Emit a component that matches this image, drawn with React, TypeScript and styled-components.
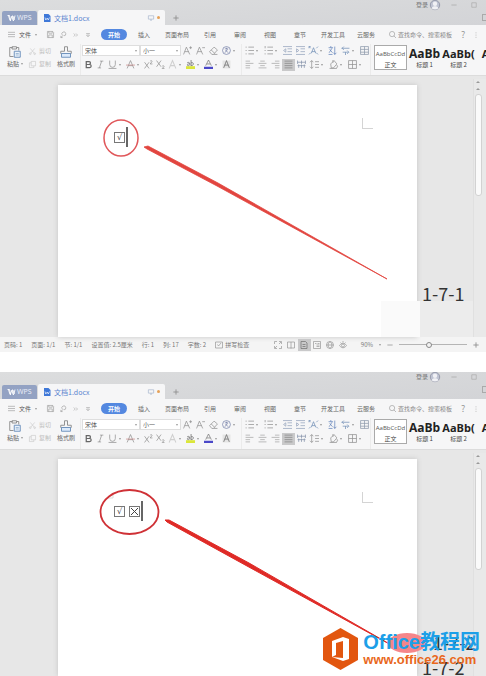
import React from "react";
import styled, { createGlobalStyle, css } from "styled-components";

const Global = createGlobalStyle`
  * { box-sizing: border-box; }
  body {
    margin: 0;
    background: #fff;
    overflow-x: hidden;
    font: 6px/8px "Noto Sans CJK SC", "Noto Sans", sans-serif;
    color: #666;
  }
  #root { overflow: hidden; }
  button, select, input {
    font: inherit;
    color: inherit;
    margin: 0;
    padding: 0;
    border: 0;
    background: none;
  }
  button { display: inline-flex; align-items: center; white-space: nowrap; }
`;

/* ---------- icons ---------- */

const Svg = styled.svg<{ $size: number; $color?: string }>`
  width: ${(p) => p.$size}px;
  height: ${(p) => p.$size}px;
  flex: none;
  display: block;
  overflow: visible;
  fill: none;
  stroke: ${(p) => p.$color || "#909090"};
  stroke-width: 1.3;
`;

const shapes: Record<string, React.ReactNode> = {
  wps: <path d="M1 3h4l2 9 3-8h2l2 8 2-9M3 3l3 10h2M10 4l2 9h2" strokeWidth="1.8" />,
  doc: (
    <>
      <path d="M2 0h9l4 4v12H2z" fill="#3f78d8" stroke="none" />
      <path d="M4 7l1.500 5L8.500 8l2 4L13 7" stroke="#fff" />
    </>
  ),
  monitor: <path d="M1 2h14v9H1zM6 14h4M8 11v3" strokeWidth="1.800" />,
  plus: <path d="M8 1v14M1 8h14" strokeWidth="2.400" />,
  user: (
    <>
      <circle cx="8" cy="8" r="7.500" fill="#bfc3d2" stroke="#8b8fa2" />
      <circle cx="8" cy="6" r="3.500" fill="#f1f1f5" stroke="none" />
      <path d="M2.500 13c2-4 9-4 11 0-3 3-8 3-11 0z" fill="#f1f1f5" stroke="none" />
    </>
  ),
  min: <path d="M1 8h14" strokeWidth="2" />,
  max: <path d="M2 2h12v12H2z" strokeWidth="1.800" />,
  burger: <path d="M0 3h16M0 8h16M0 13h16" />,
  save: <path d="M1 1h12l2 2v12H1zM4 1v4h8V1M4 15V9h8v6" />,
  preview: <path d="M5 9a4.500 4.500 0 1 1 4 2M8 9l-6 6M2 11v4h4" />,
  more: <path d="M2 4l4 4-4 4M8 4l4 4-4 4" />,
  down: <path d="M3 4h10M4 8h8l-4 5z" />,
  search: <path d="M7 1a6 6 0 1 1 0 12A6 6 0 0 1 7 1M11 11l5 5" />,
  dots: <path d="M8 1v2.500M8 7v2.500M8 13v2.500" strokeWidth="2" />,
  paste: (
    <>
      <path d="M5 2H1v12h5M10 2h3v4M4 1h6v3H4z" />
      <path d="M7 7h8v8H7z" fill="#eaf2fb" stroke="#6f93bd" />
      <path d="M9 10h4M9 12h4" stroke="#6f93bd" strokeWidth="0.800" />
    </>
  ),
  cut: <path d="M3 1l9 11M13 1L4 12M3 11a2 2 0 1 1-.1 4 2 2 0 0 1 .1-4M13 11a2 2 0 1 1-.1 4 2 2 0 0 1 .1-4" />,
  copy: <path d="M5 1h10v10H5zM5 4H1v11h10v-4" />,
  brush: (
    <>
      <path d="M6 7V1h4v6h5v3H1V7z" />
      <path d="M2 10h12v5H2z" fill="#dceafb" stroke="#6f93bd" />
    </>
  ),
  bold: <path d="M4 3h5a2.500 2.500 0 0 1 0 5H4zM4 8h6a2.500 2.500 0 0 1 0 5.500H4z" strokeWidth="2.200" stroke="#666" />,
  italic: <path d="M7 2h6M3 14h6M10 2L6 14" />,
  under: <path d="M3 1v7a5 5 0 0 0 10 0V1M1 15h14" />,
  strike: (
    <>
      <path d="M2 15L8 1l6 14M4 10h8" />
      <path d="M0 9h16" stroke="#c98a8a" />
    </>
  ),
  sup: <path d="M1 4l8 11M9 4L1 15M11 2c2-2 4 0 3 1l-3 4h4" />,
  sub: <path d="M1 1l8 11M9 1L1 12M11 11c2-2 4 0 3 1l-3 3h4" />,
  ghostA: <path d="M2 15L8 1l6 14M4 10h8" stroke="#cfcfcf" strokeWidth="1.800" />,
  mark: (
    <>
      <path d="M0 11h16v5H0z" fill="#dbe63a" stroke="none" />
      <path d="M2 5c4-2 5 0 5 5M7 7c-6-1-6 4-2 3M9 0v10M9 5c5-2 6 5 0 5" stroke="#666" />
    </>
  ),
  colorA: (
    <>
      <path d="M3 10L8 0l5 10M5 7h6" stroke="#777" />
      <path d="M0 12h16v4H0z" fill="#4a48c8" stroke="none" />
    </>
  ),
  shadeA: (
    <>
      <path d="M1 1h14v14H1z" fill="#e4e4e4" stroke="none" />
      <path d="M3 14L8 1l5 13M5 9h6" stroke="#666" />
    </>
  ),
  grow: <path d="M1 15L6 2l6 13M3 10h7M11 3h5M13.500 0.500v5" />,
  shrink: <path d="M1 15L6 2l6 13M3 10h7M11 3h5" />,
  eraser: <path d="M1 10l8-8 6 5-7 8H5zM4 7l6 6M8 15h7" />,
  phonetic: <path d="M8 1a7 7 0 1 1-.1 14A7 7 0 0 1 8 1M5 5h6M8 3v3M5 12l5-6M6 7l5 5" stroke="#7681a8" />,
  bullets: <path d="M1 2h2M1 8h2M1 14h2M6 2h10M6 8h10M6 14h10" />,
  numbers: <path d="M2 0v4M1 8h2M1 14h2M6 2h10M6 8h10M6 14h10" />,
  outdent: <path d="M0 1h16M8 5h8M8 10h8M0 15h16M5 5L1 8l4 3z" stroke="#93a2ba" />,
  indent: <path d="M0 1h16M8 5h8M8 10h8M0 15h16M1 5l4 3-4 3z" stroke="#93a2ba" />,
  scaleA: <path d="M4 13L8 3l4 10M5 10h6M0 1l3 3M0 1h3M0 1v3M16 1l-3 3M16 15l-3-3M0 15l3-3" stroke="#6f8db5" />,
  sort: <path d="M1 3h8M5 0v3M2 12l5-8M3 6l5 6M12 1v14M10 12l2 3 3-3M1 15h7" stroke="#6484ba" />,
  tabs: <path d="M1 4h14M5 1L2 4l3 3M3 11h10M11 8l3 3-3 3M8 11v5" stroke="#6f8db5" />,
  table: <path d="M1 1h14v14H1zM1 6h14M8 1v14M1 11h14" stroke="#8c98aa" />,
  left: <path d="M1 2h8M1 6h14M1 10h8M1 14h8" stroke="#a5a5a5" />,
  center: <path d="M4 2h8M1 6h14M4 10h8M1 14h14" stroke="#a5a5a5" />,
  right: <path d="M7 2h8M1 6h14M7 10h8M7 14h8" stroke="#a5a5a5" />,
  justify: <path d="M1 2h14M1 6h14M1 10h14M1 14h14" stroke="#858585" />,
  distribute: <path d="M1 1v6M15 1v6M8 1v6M1 4h14M1 10h14M3 8v6M8 8v6M13 8v6" stroke="#8593aa" />,
  spacing: <path d="M3 1v14M0 4l3-3 3 3M0 12l3 3 3-3M9 3h7M9 8h7M9 13h7" />,
  fill: <path d="M3 7l6-6 5 6-6 7H4zM7 0v5M14 9c3 4 0 5-1 4M1 15h13" />,
  border: <path d="M1 1h14v14H1zM8 1v14M1 8h14" />,
  spell: <path d="M1 2h14v12H1zM5 7l2 3 5-6" />,
  full: <path d="M1 6V1h5M10 1h5v5M15 10v5h-5M6 15H1v-5M10 6l4-4M6 10l-4 4" />,
  read: <path d="M1 2h14v12H1zM8 2v13" />,
  page: <path d="M2 1h9l3 3v11H2zM5 7h6M5 11h6" stroke="#666" />,
  outline: <path d="M1 1h14v14H1zM4 5h3M9 5h4M7 8h6M7 11h6" />,
  web: <path d="M8 1a7 7 0 1 1-.1 14A7 7 0 0 1 8 1M1 8h14M8 1c-5 4-5 10 0 14M8 1c5 4 5 10 0 14" />,
  eye: <path d="M1 9c4-6 10-6 14 0-4 6-10 6-14 0M8 6a3 3 0 1 1-.1 6A3 3 0 0 1 8 6M3 3l2 2M8 0v3M13 3l-2 2" />,
};

const Icon = ({ name, size = 8, color }: { name: string; size?: number; color?: string }) => (
  <Svg viewBox="0 0 16 16" $size={size} $color={color} aria-hidden>
    {shapes[name]}
  </Svg>
);

const Caret = styled.i`
  flex: none;
  width: 0;
  height: 0;
  border: 1px solid transparent;
  border-top: 2px solid #999;
  border-bottom: 0;
`;

/* ---------- window frame ---------- */

const Main = styled.main`
  display: flex;
  flex-direction: column;
  gap: 20px;
`;

const Frame = styled.section`
  display: flex;
  flex-direction: column;
  background: #f6f6f7;
  overflow: hidden;
`;

const TitleBar = styled.header<{ $tall?: boolean }>`
  display: flex;
  align-items: flex-end;
  height: ${(p) => (p.$tall ? 27 : 25)}px;
  padding-left: 2px;
  background: linear-gradient(175deg, #dcddde, #d3d4d7);
`;

const HomeTab = styled.button`
  width: 35px;
  height: 14px;
  gap: 2px;
  padding-left: 5px;
  border-radius: 2px 2px 0 0;
  background: #93a2c3;
  color: #e9edf7;
  font: 7px/8px "Noto Sans", sans-serif;
`;

const FileTab = styled.div`
  display: flex;
  align-items: center;
  width: 127px;
  height: 15px;
  gap: 3px;
  margin-left: 1px;
  padding: 0 5px;
  border-radius: 2px 2px 0 0;
  background: #f6f6f7;
  color: #5a84cf;
  font-size: 6px;
`;

const TabName = styled.span`
  flex: 1;
  font-size: 7px;
`;

const Dot = styled.i`
  width: 3px;
  height: 3px;
  border-radius: 50%;
  background: #e5a158;
`;

const NewTab = styled.button`
  height: 14px;
  padding: 0 8px;
`;

const TitleEnd = styled.div`
  display: flex;
  flex-direction: column;
  align-self: flex-start;
  align-items: flex-end;
  gap: 4px;
  margin-left: auto;
`;

const WindowControls = styled.div`
  display: flex;
  align-items: center;
  height: 10px;
  gap: 2px;
  padding-right: 9px;
  color: #777;
`;

const ControlButton = styled.button<{ $w: number }>`
  width: ${(p) => p.$w}px;
  height: 8px;
  justify-content: flex-end;
`;

const PanelToggle = styled.button`
  width: 4px;
  height: 7px;
  border: 1px solid #aaa;
  border-right: 0;
`;

const MenuBar = styled.nav`
  display: flex;
  align-items: center;
  height: 19px;
  padding-left: 8px;
  white-space: nowrap;
`;

const FileMenu = styled.button`
  gap: 4px;
  color: #555;
`;

const QuickTools = styled.div`
  display: flex;
  align-items: center;
  gap: 6px;
  margin: 0 10px 0 10px;
`;

const MenuTab = styled.button<{ $active?: boolean }>`
  justify-content: center;
  min-width: 30px;
  padding: 0 6px;
  color: #666;
  ${(p) =>
    p.$active &&
    css`
      width: 26px;
      min-width: 26px;
      height: 11px;
      margin-right: 2px;
      border-radius: 6px;
      background: #5488e0;
      color: #fff;
      font-weight: 700;
    `}
`;

const SearchBox = styled.label`
  display: flex;
  align-items: center;
  gap: 2px;
  margin-left: 8px;
`;

const SearchInput = styled.input`
  width: 60px;
  height: 8px;
  outline: 0;
  &::placeholder { color: #888; opacity: 1; }
`;

const Help = styled.button`
  margin: 0 8px 0 3px;
  color: #999;
  font-size: 9px;
`;

/* ---------- ribbon ---------- */

const Ribbon = styled.div`
  display: flex;
  height: 32px;
  border-bottom: 1px solid #dcdcdc;
  white-space: nowrap;
  overflow: hidden;
`;

const Group = styled.div<{ $w: number }>`
  display: flex;
  flex: none;
  width: ${(p) => p.$w}px;
  padding-left: 1px;
  border-right: 1px solid #ebebeb;
`;

const BigButton = styled.button`
  flex-direction: column;
  gap: 2px;
  width: 28px;
  height: 27px;
  padding-top: 2px;
`;

const BigLabel = styled.span`
  display: flex;
  align-items: center;
  gap: 2px;
`;

const PairColumn = styled.div`
  display: flex;
  flex-direction: column;
  gap: 5px;
  width: 23px;
  padding-top: 3px;
`;

const PairButton = styled.button`
  gap: 3px;
  height: 8px;
  color: #bdbdbd;
`;

const Rows = styled.div`
  display: flex;
  flex-direction: column;
  gap: 1px;
  width: 100%;
`;

const ToolRow = styled.div`
  display: flex;
  align-items: center;
  height: 13px;
`;

const ToolButton = styled.button<{ $w: number; $active?: boolean }>`
  flex: none;
  gap: 2px;
  width: ${(p) => p.$w}px;
  height: 12px;
  padding-left: 2px;
  background: ${(p) => (p.$active ? "#c9c9ca" : "none")};
`;

const Select = styled.select`
  appearance: none;
  width: 100%;
  height: 11px;
  padding: 0 2px;
  border: 1px solid #dedede;
  background: #fff;
  color: #555;
  outline: 0;
`;

const SelectWrap = styled.label<{ $w: number }>`
  display: flex;
  align-items: center;
  flex: none;
  width: ${(p) => p.$w}px;
  ${Caret} { margin-left: -5px; }
`;

const Gallery = styled.div`
  display: flex;
  flex: none;
  gap: 1px;
  padding: 1px 0 0 3px;
`;

const StyleCard = styled.button<{ $active?: boolean }>`
  flex-direction: column;
  justify-content: space-between;
  width: 33px;
  height: 25px;
  padding: 1px 0;
  border: 1px solid ${(p) => (p.$active ? "#aaa" : "transparent")};
  background: ${(p) => (p.$active ? "#fff" : "none")};
  color: #444;
`;

const Sample = styled.span<{ $size: number }>`
  height: 14px;
  font: ${(p) => (p.$size > 6 ? 700 : 400)} ${(p) => p.$size}px/14px "Open Sans", "Noto Sans", sans-serif;
  color: ${(p) => (p.$size > 6 ? "#222" : "#555")};
`;

/* ---------- document ---------- */

const Workspace = styled.div<{ $h: number }>`
  display: grid;
  grid-template-columns: 58px minmax(0, 1fr) 56px 13px;
  height: ${(p) => p.$h}px;
  padding-top: 9px;
  background: #e7e7e7;
`;

const Paper = styled.article`
  position: relative;
  grid-column: 2;
  padding: 42px 56px;
  background: #fff;
  box-shadow: 0 0 5px #c4c4c4;
`;

const Line = styled.p`
  display: flex;
  align-items: center;
  gap: 4px;
  height: 20px;
  margin: 0;
`;

const Box = styled.span`
  display: grid;
  place-items: center;
  width: 11px;
  height: 11px;
  border: 1px solid #777;
  color: #444;
  font: 8px/9px "DejaVu Sans", sans-serif;
`;

const Cross = styled.svg`
  width: 7px;
  height: 7px;
  stroke: #444;
`;

const TextCursor = styled.i`
  width: 2px;
  height: 20px;
  margin-left: -3px;
  background: #666;
`;

const CropMark = styled.i`
  position: absolute;
  top: 33px;
  right: 44px;
  width: 11px;
  height: 11px;
  border: solid #d4d4d4;
  border-width: 0 0 1px 1px;
`;

const Annotation = styled.svg`
  position: absolute;
  top: 0;
  left: 0;
  width: 360px;
  height: 217px;
  overflow: visible;
`;

const Gutter = styled.div`
  position: relative;
`;

const Smudge = styled.i`
  position: absolute;
  left: -36px;
  bottom: 0;
  width: 92px;
  height: 36px;
  background: linear-gradient(90deg, #fafafa 39px, #ececec 39px, #ececec);
`;

const Caption = styled.span<{ $top: number; $small?: boolean }>`
  position: absolute;
  z-index: 1;
  top: ${(p) => p.$top}px;
  left: ${(p) => (p.$small ? 16 : 5)}px;
  color: #333;
  white-space: nowrap;
  font-size: 18px;
  line-height: 20px;
`;

const ScrollBar = styled.div`
  display: flex;
  flex-direction: column;
  align-items: center;
  gap: 3px;
  margin-top: -6px;
  padding-right: 4px;
  border-left: 1px solid #e0e0e0;
  background: #e9e9e9;
`;

const Thumb = styled.i`
  width: 7px;
  height: 102px;
  margin-top: 1px;
  border: 1px solid #d2d2d2;
  border-radius: 3px;
  background: #fafafa;
`;

const UpArrow = styled.i`
  width: 4px;
  height: 4px;
  border: 2px solid transparent;
  border-bottom-color: #999;
  border-top: 0;
`;

/* ---------- status bar ---------- */

const StatusBar = styled.footer`
  display: flex;
  align-items: center;
  height: 15px;
  padding: 0 7px 0 4px;
  gap: 9px;
  background: #f4f4f4;
  color: #777;
  white-space: nowrap;
`;

const Spell = styled.span`
  display: flex;
  align-items: center;
  gap: 2px;
`;

const Views = styled.div`
  display: flex;
  margin-left: auto;
  margin-right: 2px;
`;

const ViewButton = styled.button<{ $active?: boolean }>`
  justify-content: center;
  width: 13px;
  height: 12px;
  background: ${(p) => (p.$active ? "#c9c9ca" : "none")};
`;

const Zoom = styled.div`
  display: flex;
  align-items: center;
  gap: 6px;
`;

const Slider = styled.input`
  appearance: none;
  width: 68px;
  height: 7px;
  background: linear-gradient(#b5b5b5, #b5b5b5) center / 100% 1px no-repeat;
  &::-webkit-slider-thumb {
    appearance: none;
    width: 6px;
    height: 6px;
    border: 1px solid #888;
    border-radius: 50%;
    background: #f4f4f4;
  }
`;

/* ---------- site badge ---------- */

const Badge = styled.a`
  position: absolute;
  z-index: 2;
  right: -63px;
  top: 169px;
  display: flex;
  align-items: center;
  gap: 5px;
  text-decoration: none;
  white-space: nowrap;
`;

const Hexagon = styled.svg`
  width: 35px;
  height: 42px;
`;

const BadgeText = styled.span`
  display: flex;
  flex-direction: column;
`;

const SiteName = styled.strong`
  color: #1c9fe8;
  font: 700 20px/22px "Liberation Sans", "Noto Sans CJK SC", sans-serif;
`;

const SiteUrl = styled.span`
  color: #e9681c;
  font: 700 13px/14px "Liberation Sans", sans-serif;
`;

type Tool = [name: string, label: string, caret?: boolean, active?: boolean];

const fontTop: Tool[] = [
  ["grow", "增大字号"],
  ["shrink", "减小字号"],
  ["eraser", "清除格式"],
  ["phonetic", "拼音指南", true],
];
const fontBottom: Tool[] = [
  ["bold", "加粗"],
  ["italic", "倾斜"],
  ["under", "下划线", true],
  ["strike", "删除线", true],
  ["sup", "上标"],
  ["sub", "下标"],
  ["ghostA", "文字效果", true],
  ["mark", "突出显示", true],
  ["colorA", "字体颜色", true],
  ["shadeA", "字符底纹"],
];
const paraTop: Tool[] = [
  ["bullets", "项目符号", true],
  ["numbers", "编号", true],
  ["outdent", "减少缩进"],
  ["indent", "增加缩进"],
  ["scaleA", "中文版式", true],
  ["sort", "排序"],
  ["tabs", "制表位", true],
  ["table", "表格"],
];
const paraBottom: Tool[] = [
  ["left", "左对齐"],
  ["center", "居中"],
  ["right", "右对齐"],
  ["justify", "两端对齐", false, true],
  ["distribute", "分散对齐"],
  ["spacing", "行距", true],
  ["fill", "底纹", true],
  ["border", "边框", true],
];

const Tools = ({ items, cell }: { items: Tool[]; cell: number }) => (
  <>
    {items.map(([name, label, caret, active]) => (
      <ToolButton key={name} aria-label={label} $w={caret ? cell + 6 : cell} $active={active}>
        <Icon name={name} size={9} />
        {caret && <Caret />}
      </ToolButton>
    ))}
  </>
);

const menuTabs = ["插入", "页面布局", "引用", "审阅", "视图", "章节", "开发工具", "云服务"];

const gallery: [string, number, string][] = [
  ["AaBbCcDd", 6, "正文"],
  ["AaBb", 12, "标题 1"],
  ["AaBb(", 11, "标题 2"],
  ["AaB", 11, "标题"],
];

const Header = ({ tall }: { tall?: boolean }) => (
  <>
    <TitleBar $tall={tall}>
      <HomeTab>
        <Icon name="wps" color="#fff" />
        WPS
      </HomeTab>
      <FileTab>
        <Icon name="doc" />
        <TabName>文档1.docx</TabName>
        <Icon name="monitor" size={6} color="#a5b4cc" />
        <Dot />
      </FileTab>
      <NewTab aria-label="新建">
        <Icon name="plus" size={6} />
      </NewTab>
      <TitleEnd>
        <WindowControls>
          登录
          <Icon name="user" size={10} />
          <ControlButton $w={15} aria-label="最小化">
            <Icon name="min" size={6} color="#aaa" />
          </ControlButton>
          <ControlButton $w={18} aria-label="最大化">
            <Icon name="max" size={6} color="#aaa" />
          </ControlButton>
        </WindowControls>
        <PanelToggle aria-label="侧栏" />
      </TitleEnd>
    </TitleBar>
    <MenuBar>
      <FileMenu>
        <Icon name="burger" size={7} />
        文件
        <Caret />
      </FileMenu>
      <QuickTools>
        <Icon name="save" size={7} />
        <Icon name="preview" size={7} />
        <Icon name="more" size={6} />
        <Icon name="down" size={6} />
      </QuickTools>
      <MenuTab $active>开始</MenuTab>
      {menuTabs.map((t) => (
        <MenuTab key={t}>{t}</MenuTab>
      ))}
      <SearchBox>
        <Icon name="search" size={7} />
        <SearchInput aria-label="搜索" placeholder="查找命令、搜索模板" />
      </SearchBox>
      <Help aria-label="帮助">?</Help>
      <Icon name="dots" size={6} color="#aaa" />
    </MenuBar>
    <Ribbon>
      <Group $w={81}>
        <BigButton>
          <Icon name="paste" size={12} />
          <BigLabel>
            粘贴
            <Caret />
          </BigLabel>
        </BigButton>
        <PairColumn>
          <PairButton>
            <Icon name="cut" size={7} color="#c4c4c4" />
            剪切
          </PairButton>
          <PairButton>
            <Icon name="copy" size={7} color="#c4c4c4" />
            复制
          </PairButton>
        </PairColumn>
        <BigButton>
          <Icon name="brush" size={12} />
          <BigLabel>格式刷</BigLabel>
        </BigButton>
      </Group>
      <Group $w={161}>
        <Rows>
          <ToolRow>
            <SelectWrap $w={58}>
              <Select aria-label="字体">
                <option>宋体</option>
              </Select>
              <Caret />
            </SelectWrap>
            <SelectWrap $w={41}>
              <Select aria-label="字号">
                <option>小一</option>
              </Select>
              <Caret />
            </SelectWrap>
            <Tools items={fontTop} cell={13} />
          </ToolRow>
          <ToolRow>
            <Tools items={fontBottom} cell={12} />
          </ToolRow>
        </Rows>
      </Group>
      <Group $w={129}>
        <Rows>
          <ToolRow>
            <Tools items={paraTop} cell={13} />
          </ToolRow>
          <ToolRow>
            <Tools items={paraBottom} cell={13} />
          </ToolRow>
        </Rows>
      </Group>
      <Gallery>
        {gallery.map(([sample, size, name], i) => (
          <StyleCard key={name} $active={i === 0}>
            <Sample $size={size}>{sample}</Sample>
            {name}
          </StyleCard>
        ))}
      </Gallery>
    </Ribbon>
  </>
);

const Scroll = () => (
  <ScrollBar>
    <UpArrow />
    <UpArrow />
    <Thumb />
  </ScrollBar>
);

export default function App() {
  return (
    <>
      <Global />
      <Main>
        <Frame>
          <Header />
          <Workspace $h={261}>
            <Paper>
              <Line>
                <Box>√</Box>
                <TextCursor />
              </Line>
              <CropMark />
              <Annotation aria-hidden>
                <ellipse cx="63" cy="53" rx="17" ry="18" fill="none" stroke="#e0575a" strokeWidth="1.500" />
                <path d="M86 62l4-1 70 37 169 96-170-93-70-37z" fill="#e2453f" stroke="#e2453f" strokeWidth="0.800" />
              </Annotation>
            </Paper>
            <Gutter>
              <Smudge />
              <Caption $top={198}>1-7-1</Caption>
            </Gutter>
            <Scroll />
          </Workspace>
          <StatusBar>
            <span>页码: 1</span>
            <span>页面: 1/1</span>
            <span>节: 1/1</span>
            <span>设置值: 2.5厘米</span>
            <span>行: 1</span>
            <span>列: 17</span>
            <span>字数: 2</span>
            <Spell>
              <Icon name="spell" />
              拼写检查
            </Spell>
            <Views>
              {["full", "read", "page", "outline", "web", "eye"].map((v) => (
                <ViewButton key={v} aria-label={v} $active={v === "page"}>
                  <Icon name={v} />
                </ViewButton>
              ))}
            </Views>
            <Zoom>
              <span>90%</span>
              <Caret />
              <Icon name="min" size={6} />
              <Slider type="range" aria-label="缩放" min={10} max={200} defaultValue={94} />
              <Icon name="plus" size={6} />
            </Zoom>
          </StatusBar>
        </Frame>
        <Frame>
          <Header tall />
          <Workspace $h={226}>
            <Paper>
              <Line>
                <Box>√</Box>
                <Box>
                  <Cross viewBox="0 0 7 7" aria-label="×">
                    <path d="M0 0l7 7M7 0L0 7" />
                  </Cross>
                </Box>
                <TextCursor />
              </Line>
              <CropMark />
              <Annotation aria-hidden>
                <path d="M55 34v5h-5" fill="none" stroke="#ddd" />
                <ellipse cx="71.500" cy="53" rx="29" ry="22" fill="none" stroke="#cf3136" strokeWidth="1.800" />
                <path d="M107 61l4 0 80 43 144 83-146-80-80-44z" fill="#df2a26" stroke="#df2a26" strokeWidth="1" />
                <ellipse cx="349" cy="184" rx="19" ry="10" fill="#f5868a" />
              </Annotation>
              <Badge href="#">
                <Hexagon viewBox="0 0 35 42" aria-hidden>
                  <path d="M17.500 0L35 10v22L17.500 42 0 32V10z" fill="#e2560f" />
                  <path d="M9 13l11-4 6 2v20l-6 2-11-4 11 1V13l-7 2v12l-4 2z" fill="#fff" />
                </Hexagon>
                <BadgeText>
                  <SiteName>Office教程网</SiteName>
                  <SiteUrl>www.office26.com</SiteUrl>
                </BadgeText>
              </Badge>
            </Paper>
            <Gutter>
              <Caption $top={173} $small>
                1-7-2
              </Caption>
              <Caption $top={198}>1-7-2</Caption>
            </Gutter>
            <Scroll />
          </Workspace>
        </Frame>
      </Main>
    </>
  );
}
